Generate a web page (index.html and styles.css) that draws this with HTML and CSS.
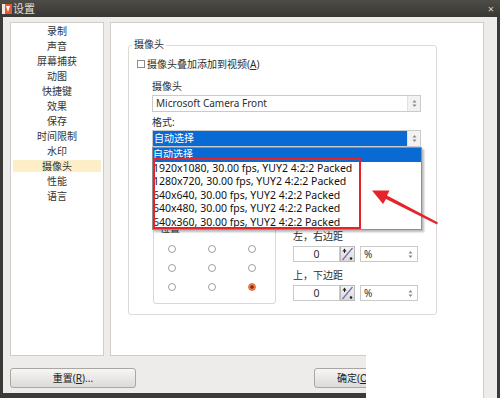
FILE: index.html
```html
<!DOCTYPE html>
<html lang="zh-CN">
<head>
<meta charset="utf-8">
<title>设置</title>
<link rel="stylesheet" href="styles.css">
</head>
<body>
<div class="window">
  <div class="titlebar">
    <svg class="app-icon" width="10" height="10" viewBox="0 0 10 10"><rect width="10" height="10" fill="#e35a2a"/><rect x="0" y="0" width="3" height="10" fill="#f2e9e4"/><path d="M4 2 L8 2 L6 8 Z" fill="#fff"/></svg>
    <span class="title">设置</span>
    <span class="close">×</span>
  </div>
  <div class="client">
    <div class="panels">
      <ul class="nav">
        <li>录制</li>
        <li>声音</li>
        <li>屏幕捕获</li>
        <li>动图</li>
        <li>快捷键</li>
        <li>效果</li>
        <li>保存</li>
        <li>时间限制</li>
        <li>水印</li>
        <li class="active">摄像头</li>
        <li>性能</li>
        <li>语言</li>
      </ul>
      <div class="content">
        <div class="group">
          <div class="legend">摄像头</div>
          <div class="check"><span class="box"></span><span>摄像头叠加添加到视频(<u>A</u>)</span></div>
          <div class="field-label first">摄像头</div>
          <div class="combo"><span class="combo-text">Microsoft Camera Front</span><span class="arrows"><svg width="5" height="9" viewBox="0 0 5 9"><path d="M2.5 1 L4.5 3.5 L0.5 3.5 Z M2.5 8 L4.5 5.5 L0.5 5.5 Z" fill="#8a8a8a"/></svg></span></div>
          <div class="field-label second">格式:</div>
          <div class="combo selected"><span class="combo-text">自动选择</span><span class="arrows"><svg width="5" height="9" viewBox="0 0 5 9"><path d="M2.5 1 L4.5 3.5 L0.5 3.5 Z M2.5 8 L4.5 5.5 L0.5 5.5 Z" fill="#8a8a8a"/></svg></span></div>
          <div class="bottom-row">
            <div class="pos-group">
              <div class="pos-legend">位置</div>
              <div class="radios">
                <span class="radio"></span><span class="radio"></span><span class="radio"></span>
                <span class="radio"></span><span class="radio"></span><span class="radio"></span>
                <span class="radio"></span><span class="radio"></span><span class="radio on"></span>
              </div>
            </div>
            <div class="margins">
              <div class="m-label">左，右边距</div>
              <div class="spin-row">
                <div class="num">0</div>
                <div class="spin"><svg width="13" height="14" viewBox="0 0 13 14"><path d="M1.5 13 L11.5 1" stroke="#7a6cb0" stroke-width="1.2"/><path d="M3.5 1.5 L5.5 4.5 L1.5 4.5 Z" fill="#222"/><rect x="3" y="4" width="1" height="2" fill="#222"/><circle cx="10" cy="11.5" r="1.3" fill="#222"/></svg></div>
                <div class="pct"><span class="combo-text">%</span><span class="arrows plain"><svg width="5" height="9" viewBox="0 0 5 9"><path d="M2.5 1 L4.5 3.5 L0.5 3.5 Z M2.5 8 L4.5 5.5 L0.5 5.5 Z" fill="#8a8a8a"/></svg></span></div>
              </div>
              <div class="m-label second">上，下边距</div>
              <div class="spin-row">
                <div class="num">0</div>
                <div class="spin"><svg width="13" height="14" viewBox="0 0 13 14"><path d="M1.5 13 L11.5 1" stroke="#7a6cb0" stroke-width="1.2"/><path d="M3.5 1.5 L5.5 4.5 L1.5 4.5 Z" fill="#222"/><rect x="3" y="4" width="1" height="2" fill="#222"/><circle cx="10" cy="11.5" r="1.3" fill="#222"/></svg></div>
                <div class="pct"><span class="combo-text">%</span><span class="arrows plain"><svg width="5" height="9" viewBox="0 0 5 9"><path d="M2.5 1 L4.5 3.5 L0.5 3.5 Z M2.5 8 L4.5 5.5 L0.5 5.5 Z" fill="#8a8a8a"/></svg></span></div>
              </div>
            </div>
          </div>
          <div class="dropdown">
            <div class="opt hl">自动选择</div>
            <div class="opt">1920x1080, 30.00 fps, YUY2 4:2:2 Packed</div>
            <div class="opt">1280x720, 30.00 fps, YUY2 4:2:2 Packed</div>
            <div class="opt">640x640, 30.00 fps, YUY2 4:2:2 Packed</div>
            <div class="opt">640x480, 30.00 fps, YUY2 4:2:2 Packed</div>
            <div class="opt">640x360, 30.00 fps, YUY2 4:2:2 Packed</div>
          </div>
        </div>
      </div>
    </div>
    <div class="buttons">
      <div class="btn reset">重置(<u>R</u>)...</div>
      <div class="btn ok">确定(<u>O</u>)</div>
    </div>
  </div>
  <div class="highlight-box"></div>
  <svg class="arrow" width="500" height="398" viewBox="0 0 500 398"><path d="M437 224.5 L386 199 L383 204 L372 190.5 L389.5 190.5 L387 195.5 L438 222.5 Z" fill="#e5232b"/></svg>
  <div class="patch"></div>
</div>
</body>
</html>
```

FILE: styles.css
```css
* { box-sizing: border-box; }
html, body { margin: 0; padding: 0; }
body {
  width: 500px;
  height: 398px;
  overflow: hidden;
  background: #3b3a36;
  font-family: "Noto Sans", "Noto Sans CJK SC", sans-serif;
  font-size: 10px;
  color: #2e2e2e;
}
u { text-decoration: underline; text-underline-offset: 1px; }
.window {
  position: relative;
  width: 500px;
  height: 398px;
  display: flex;
  flex-direction: column;
}
.titlebar {
  height: 17px;
  flex: none;
  display: flex;
  align-items: center;
  background: linear-gradient(#4d4c47, #383733);
  color: #e2ded6;
  padding-left: 2px;
}
.app-icon { display: block; }
.title { margin-left: 1px; font-size: 11px; line-height: 17px; }
.close { margin-left: auto; margin-right: 6px; font-size: 11px; color: #d6d1c8; line-height: 17px; }
.client {
  margin: 0 3px;
  height: 376px;
  flex: none;
  background: #edecea;
  padding: 5px 13px 0 7px;
  display: flex;
  flex-direction: column;
}
.panels { display: flex; gap: 6px; height: 334px; flex: none; }
.nav {
  width: 94px;
  background: #fff;
  border: 1px solid #d0cdc9;
  list-style: none;
  margin: 0;
  padding: 2px 2px 0 2px;
  display: flex;
  flex-direction: column;
  gap: 3px;
}
.nav li { height: 12px; line-height: 12px; text-align: center; color: #333; }
.nav li.active { background: #fcefc8; }
.content {
  width: 374px;
  background: #fff;
  border: 1px solid #d0cdc9;
  padding: 22px 0 0 17px;
}
.group {
  position: relative;
  width: 309px;
  height: 270px;
  border: 1px solid #dcdad7;
  border-radius: 3px;
  display: flex;
  flex-direction: column;
}
.legend {
  align-self: flex-start;
  margin: -8px 0 0 3px;
  padding: 0 2px;
  height: 12px;
  line-height: 12px;
  background: #fff;
}
.check {
  display: flex;
  align-items: center;
  gap: 2px;
  height: 12px;
  line-height: 12px;
  margin: 8px 0 0 8px;
}
.box { width: 8px; height: 8px; border: 1px solid #8c8c8c; background: #fff; }
.field-label { margin-left: 23px; height: 12px; line-height: 12px; }
.field-label.first { margin-top: 10px; }
.field-label.second { margin-top: 4px; }
.combo {
  margin: 3px 0 0 23px;
  width: 269px;
  height: 17px;
  border: 1px solid #cacaca;
  display: flex;
  background: #fff;
}
.combo + .field-label { margin-top: 4px; }
.combo.selected { margin-top: 2px; }
.combo-text {
  flex: 1;
  padding-left: 3px;
  line-height: 15px;
  font-size: 10px;
  white-space: nowrap;
}
.combo.selected .combo-text { background: #0a6ad4; color: #fff; padding-left: 1px; }
.arrows {
  width: 13px;
  display: flex;
  align-items: center;
  justify-content: center;
  background: #f2f2f2;
  border-left: 1px solid #e2e2e2;
}
.arrows.plain { background: #fff; border-left: none; }
.bottom-row { display: flex; margin: 75px 0 0 24px; }
.pos-group {
  width: 123px;
  height: 76px;
  margin-top: 6px;
  border: 1px solid #d9d7d4;
  border-radius: 3px;
}
.pos-legend {
  width: fit-content;
  margin: -7px 0 0 5px;
  padding: 0 1px;
  height: 12px;
  line-height: 12px;
  background: #fff;
}
.radios {
  display: grid;
  grid-template-columns: repeat(3, 8px);
  grid-auto-rows: 8px;
  column-gap: 32px;
  row-gap: 11px;
  margin: 11px 0 0 14px;
}
.radio {
  width: 8px;
  height: 8px;
  border-radius: 50%;
  border: 1px solid #a0a0a0;
  background: #fff;
}
.radio.on {
  border-color: #e0703f;
  background: radial-gradient(circle, #8a2a10 0 1.4px, #ec7d4a 2px);
}
.margins { margin-left: 17px; padding-top: 8px; display: flex; flex-direction: column; }
.m-label { height: 12px; line-height: 12px; }
.m-label.second { margin-top: 7px; }
.spin-row { display: flex; height: 16px; margin-top: 4px; }
.num {
  width: 47px;
  border: 1px solid #cacaca;
  background: #fff;
  text-align: center;
  line-height: 14px;
  font-size: 10.5px;
}
.spin {
  width: 15px;
  border: 1px solid #b9b9b9;
  background: linear-gradient(#f4f4f4, #d9d9d9);
  display: flex;
  align-items: center;
  justify-content: center;
}
.pct {
  margin-left: 5px;
  width: 58px;
  border: 1px solid #cacaca;
  display: flex;
  background: #fff;
}
.pct .combo-text { line-height: 14px; }
.dropdown {
  position: absolute;
  left: 23px;
  top: 101px;
  width: 270px;
  height: 83px;
  background: #fff;
  border: 1px solid #8f8f8f;
  box-shadow: 2px 2px 2px rgba(0, 0, 0, 0.28);
  overflow: hidden;
}
.opt {
  height: 13.5px;
  line-height: 13.5px;
  padding-left: 0;
  font-size: 10.5px;
  white-space: nowrap;
  color: #111;
}
.opt.hl { background: #0a6ad4; color: #fff; font-size: 10px; }
.buttons { display: flex; margin-top: 12px; }
.btn {
  height: 20px;
  border: 1px solid #aaa7a2;
  border-radius: 3px;
  background: linear-gradient(#f7f6f5, #dddbd8);
  text-align: center;
  line-height: 18px;
  color: #222;
}
.btn.reset { width: 126px; }
.btn.ok { width: 80px; margin-left: 178px; }
.highlight-box {
  position: absolute;
  left: 153px;
  top: 158px;
  width: 208px;
  height: 71px;
  border: 2px solid #e5232b;
}
.arrow { position: absolute; left: 0; top: 0; pointer-events: none; }
.patch {
  position: absolute;
  left: 366px;
  top: 355px;
  width: 131px;
  height: 43px;
  background: linear-gradient(to right, #fff 0 117px, #d0cdc9 117px 118px, #edecea 118px);
}
```
